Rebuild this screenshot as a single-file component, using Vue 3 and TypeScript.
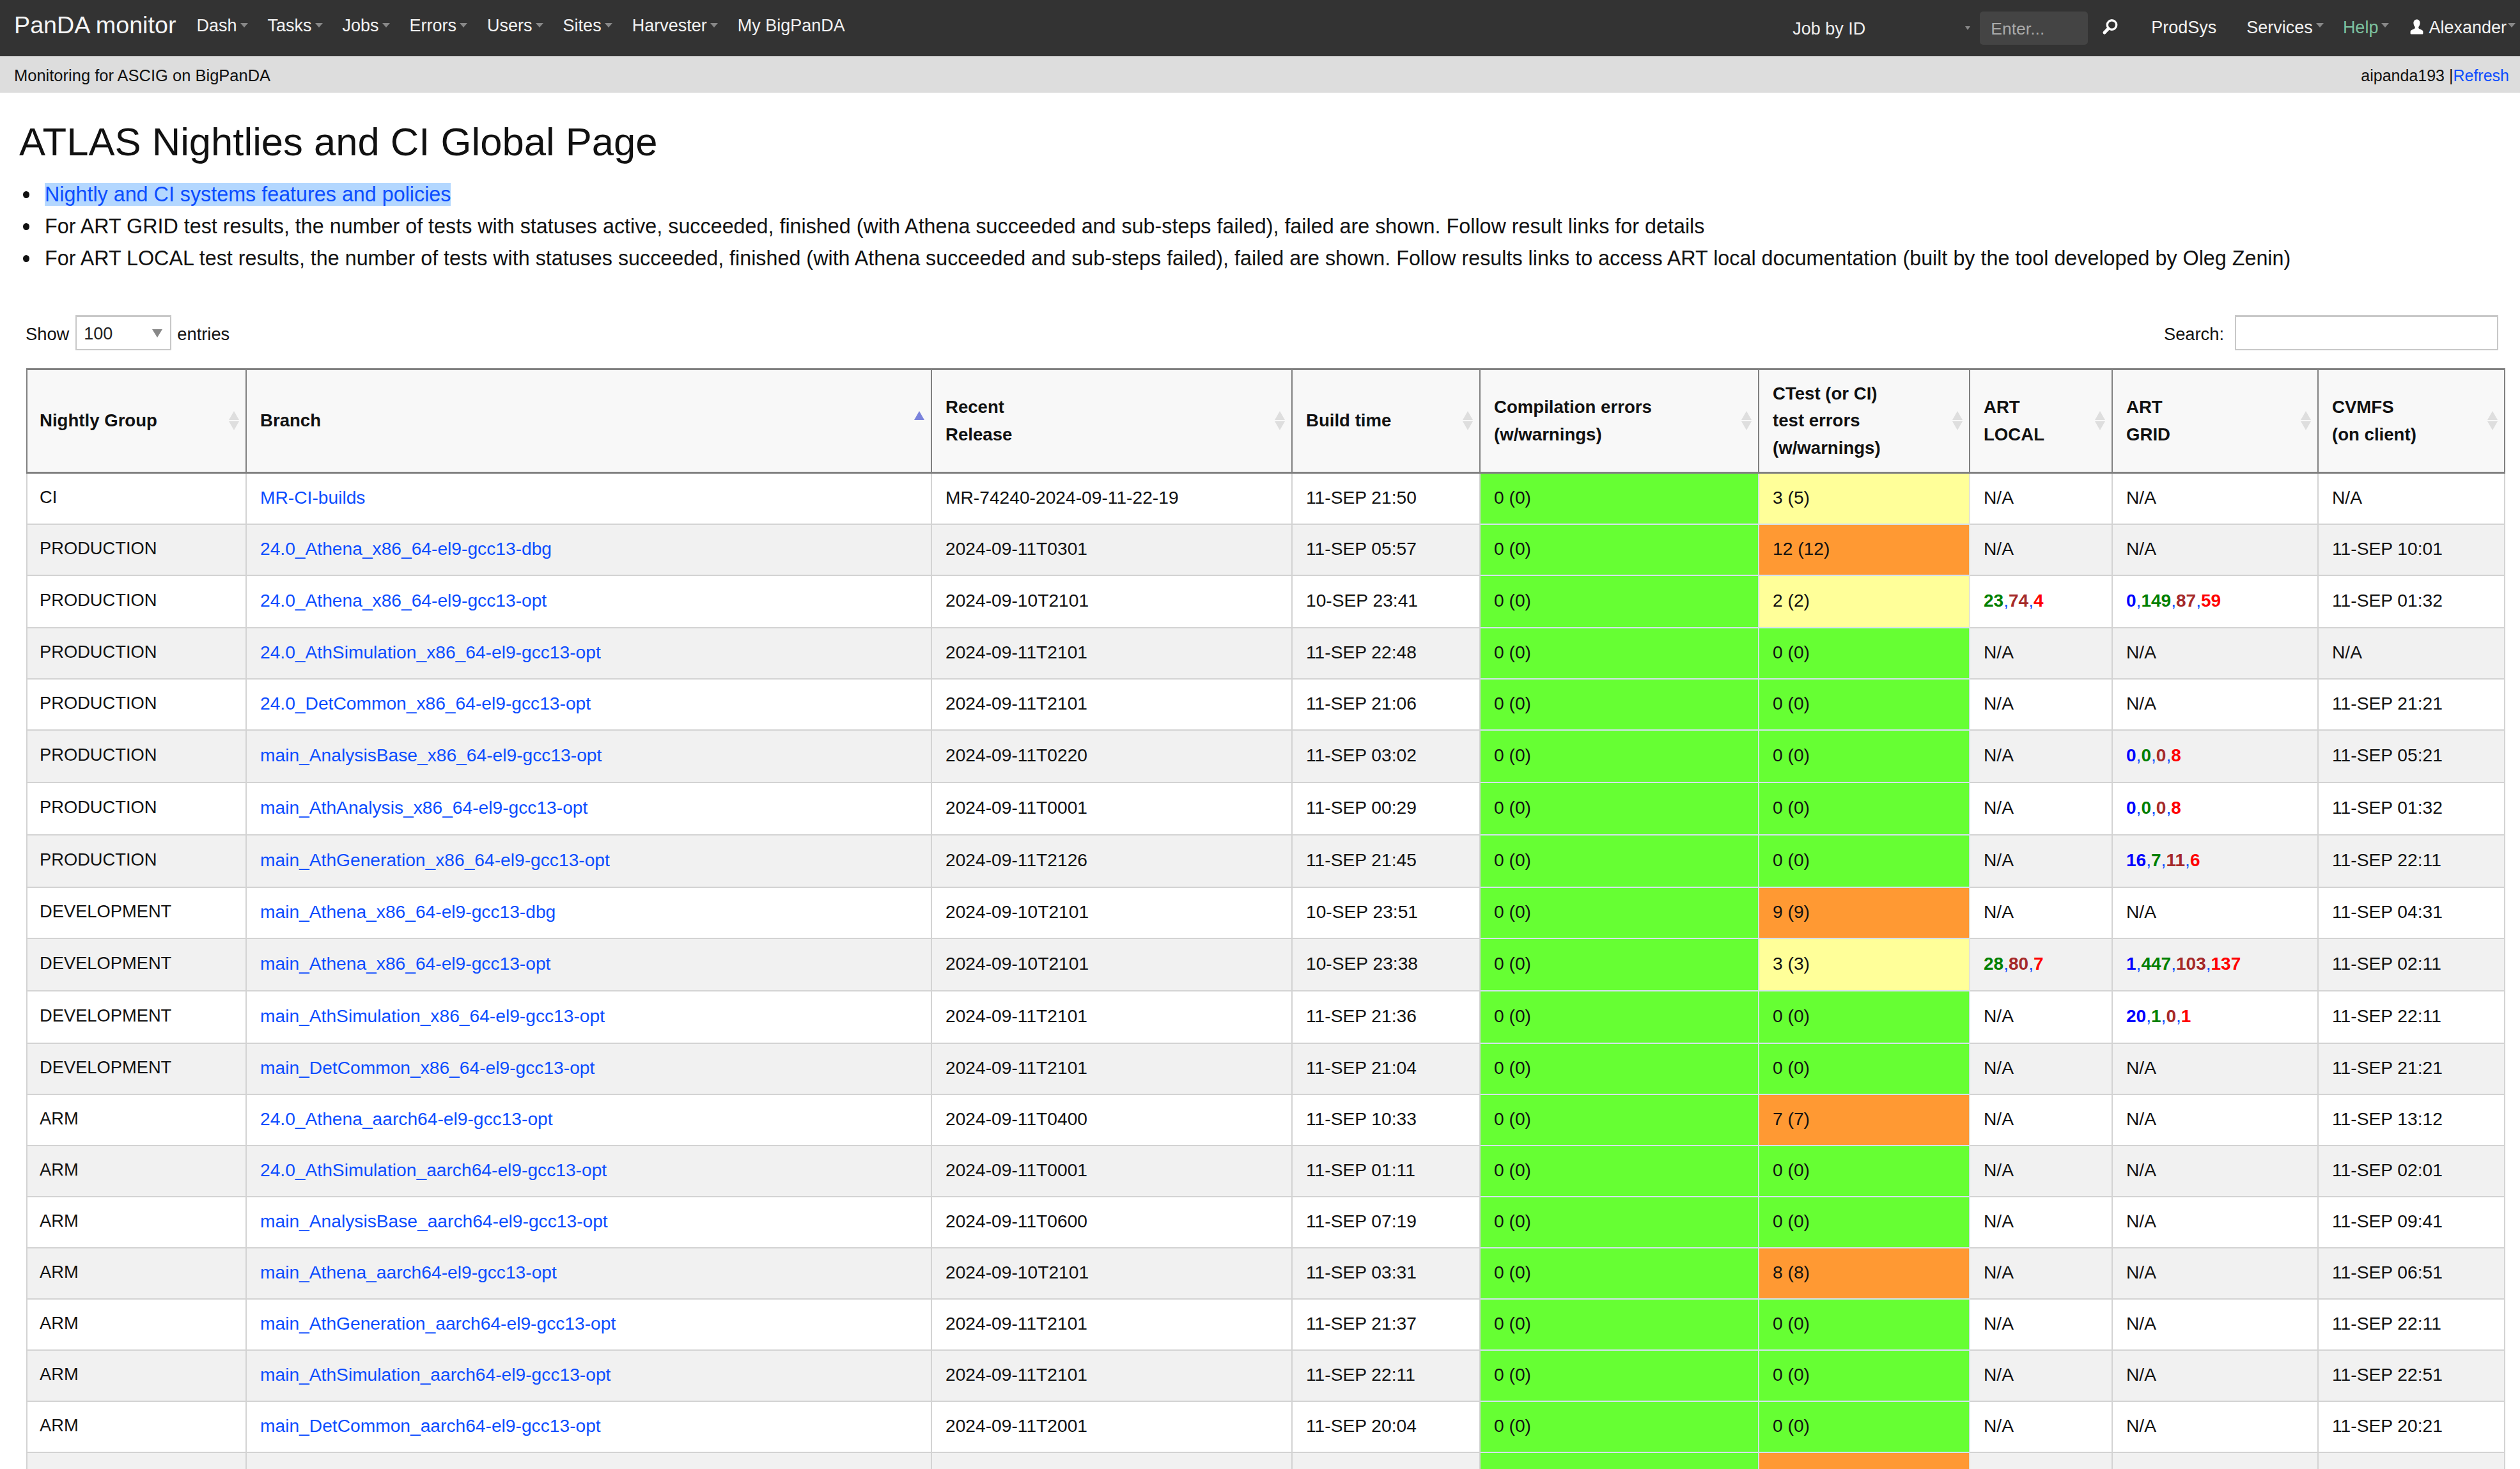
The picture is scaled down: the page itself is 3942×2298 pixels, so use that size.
<script setup lang="ts">
interface Part { t: string; c: string }
interface Row {
  group: string
  branch: string
  release: string
  build: string
  ctest: string
  local: string
  grid: string
  cvmfs: string
}

const left = ['Dash', 'Tasks', 'Jobs', 'Errors', 'Users', 'Sites', 'Harvester']

const D = 'DEVELOPMENT'
const P = 'PRODUCTION'
const rows: Row[] = [
  { group: 'CI', branch: 'MR-CI-builds', release: 'MR-74240-2024-09-11-22-19', build: '11-SEP 21:50', ctest: '3 (5)', local: '', grid: '', cvmfs: 'N/A' },
  { group: P, branch: '24.0_Athena_x86_64-el9-gcc13-dbg', release: '2024-09-11T0301', build: '11-SEP 05:57', ctest: '12 (12)', local: '', grid: '', cvmfs: '11-SEP 10:01' },
  { group: P, branch: '24.0_Athena_x86_64-el9-gcc13-opt', release: '2024-09-10T2101', build: '10-SEP 23:41', ctest: '2 (2)', local: '23,74,4', grid: '0,149,87,59', cvmfs: '11-SEP 01:32' },
  { group: P, branch: '24.0_AthSimulation_x86_64-el9-gcc13-opt', release: '2024-09-11T2101', build: '11-SEP 22:48', ctest: '0 (0)', local: '', grid: '', cvmfs: 'N/A' },
  { group: P, branch: '24.0_DetCommon_x86_64-el9-gcc13-opt', release: '2024-09-11T2101', build: '11-SEP 21:06', ctest: '0 (0)', local: '', grid: '', cvmfs: '11-SEP 21:21' },
  { group: P, branch: 'main_AnalysisBase_x86_64-el9-gcc13-opt', release: '2024-09-11T0220', build: '11-SEP 03:02', ctest: '0 (0)', local: '', grid: '0,0,0,8', cvmfs: '11-SEP 05:21' },
  { group: P, branch: 'main_AthAnalysis_x86_64-el9-gcc13-opt', release: '2024-09-11T0001', build: '11-SEP 00:29', ctest: '0 (0)', local: '', grid: '0,0,0,8', cvmfs: '11-SEP 01:32' },
  { group: P, branch: 'main_AthGeneration_x86_64-el9-gcc13-opt', release: '2024-09-11T2126', build: '11-SEP 21:45', ctest: '0 (0)', local: '', grid: '16,7,11,6', cvmfs: '11-SEP 22:11' },
  { group: D, branch: 'main_Athena_x86_64-el9-gcc13-dbg', release: '2024-09-10T2101', build: '10-SEP 23:51', ctest: '9 (9)', local: '', grid: '', cvmfs: '11-SEP 04:31' },
  { group: D, branch: 'main_Athena_x86_64-el9-gcc13-opt', release: '2024-09-10T2101', build: '10-SEP 23:38', ctest: '3 (3)', local: '28,80,7', grid: '1,447,103,137', cvmfs: '11-SEP 02:11' },
  { group: D, branch: 'main_AthSimulation_x86_64-el9-gcc13-opt', release: '2024-09-11T2101', build: '11-SEP 21:36', ctest: '0 (0)', local: '', grid: '20,1,0,1', cvmfs: '11-SEP 22:11' },
  { group: D, branch: 'main_DetCommon_x86_64-el9-gcc13-opt', release: '2024-09-11T2101', build: '11-SEP 21:04', ctest: '0 (0)', local: '', grid: '', cvmfs: '11-SEP 21:21' },
  { group: 'ARM', branch: '24.0_Athena_aarch64-el9-gcc13-opt', release: '2024-09-11T0400', build: '11-SEP 10:33', ctest: '7 (7)', local: '', grid: '', cvmfs: '11-SEP 13:12' },
  { group: 'ARM', branch: '24.0_AthSimulation_aarch64-el9-gcc13-opt', release: '2024-09-11T0001', build: '11-SEP 01:11', ctest: '0 (0)', local: '', grid: '', cvmfs: '11-SEP 02:01' },
  { group: 'ARM', branch: 'main_AnalysisBase_aarch64-el9-gcc13-opt', release: '2024-09-11T0600', build: '11-SEP 07:19', ctest: '0 (0)', local: '', grid: '', cvmfs: '11-SEP 09:41' },
  { group: 'ARM', branch: 'main_Athena_aarch64-el9-gcc13-opt', release: '2024-09-10T2101', build: '11-SEP 03:31', ctest: '8 (8)', local: '', grid: '', cvmfs: '11-SEP 06:51' },
  { group: 'ARM', branch: 'main_AthGeneration_aarch64-el9-gcc13-opt', release: '2024-09-11T2101', build: '11-SEP 21:37', ctest: '0 (0)', local: '', grid: '', cvmfs: '11-SEP 22:11' },
  { group: 'ARM', branch: 'main_AthSimulation_aarch64-el9-gcc13-opt', release: '2024-09-11T2101', build: '11-SEP 22:11', ctest: '0 (0)', local: '', grid: '', cvmfs: '11-SEP 22:51' },
  { group: 'ARM', branch: 'main_DetCommon_aarch64-el9-gcc13-opt', release: '2024-09-11T2001', build: '11-SEP 20:04', ctest: '0 (0)', local: '', grid: '', cvmfs: '11-SEP 20:21' },
]

const heads: { lines: string[]; sort: string }[] = [
  { lines: ['Nightly Group'], sort: 'both' },
  { lines: ['Branch'], sort: 'asc' },
  { lines: ['Recent', 'Release'], sort: 'both' },
  { lines: ['Build time'], sort: 'both' },
  { lines: ['Compilation errors', '(w/warnings)'], sort: 'both' },
  { lines: ['CTest (or CI)', 'test errors', '(w/warnings)'], sort: 'both' },
  { lines: ['ART', 'LOCAL'], sort: 'both' },
  { lines: ['ART', 'GRID'], sort: 'both' },
  { lines: ['CVMFS', '(on client)'], sort: 'both' },
]

const widths = [345, 1072, 564, 294, 436, 330, 223, 322, 292]

function ctestClass(v: string): string {
  const n = parseInt(v, 10)
  if (n === 0) return 'ok'
  return n < 5 ? 'warn' : 'bad'
}

function parts(v: string, colors: string[]): Part[] {
  return v.split(',').map((t, i) => ({ t, c: colors[i] }))
}
const localColors = ['c-green', 'c-brown', 'c-red']
const gridColors = ['c-blue', 'c-green', 'c-brown', 'c-red']
</script>

<template>
  <div class="page">
    <header class="topbar">
      <nav class="nav-left">
        <span class="logo">PanDA monitor</span>
        <a v-for="item in left" :key="item" class="nav-item">{{ item }}<i class="caret"></i></a>
        <a class="nav-item">My BigPanDA</a>
      </nav>
      <div class="nav-right">
        <span class="job-select">Job by ID<i class="caret small"></i></span>
        <span class="enter">Enter...</span>
        <svg class="search-icon" viewBox="0 0 26 26" width="26" height="26" aria-hidden="true">
          <circle cx="15.5" cy="10" r="7.2" fill="none" stroke="#fff" stroke-width="3.4" />
          <path d="M10.2 15.6 L4 22" stroke="#fff" stroke-width="5" stroke-linecap="round" />
        </svg>
        <a class="r-item prod">ProdSys</a>
        <a class="r-item serv">Services<i class="caret"></i></a>
        <a class="r-item help">Help<i class="caret"></i></a>
        <a class="r-item user">
          <svg class="user-icon" viewBox="0 0 21 24" width="21" height="24" aria-hidden="true">
            <path
              fill="#fff"
              d="M10.5 0.5C7 0.5 5.4 3 5.4 6c0 2.6 1.1 4.8 2.3 6v1.7c0 .9-1 1.4-2.6 2C2.6 16.6.6 17.4.6 19.5v2.8c0 .8.6 1.3 1.3 1.3h17.2c.7 0 1.3-.5 1.3-1.3v-2.8c0-2.1-2-2.9-4.5-3.8-1.6-.6-2.6-1.1-2.6-2V12c1.2-1.2 2.3-3.4 2.3-6 0-3-1.6-5.5-5.1-5.500z"
            />
          </svg>Alexander<i class="caret tight"></i>
        </a>
      </div>
    </header>

    <div class="subbar">
      <span class="sub-left">Monitoring for ASCIG on BigPanDA</span>
      <span class="sub-right">aipanda193 <span class="pipe">|</span><a class="link">Refresh</a></span>
    </div>

    <main class="content">
      <h1 class="title">ATLAS Nightlies and CI Global Page</h1>
      <ul class="notes">
        <li><a class="link selected">Nightly and CI systems features and policies</a></li>
        <li>For ART GRID test results, the number of tests with statuses active, succeeded, finished (with Athena succeeded and sub-steps failed), failed are shown. Follow result links for details</li>
        <li>For ART LOCAL test results, the number of tests with statuses succeeded, finished (with Athena succeeded and sub-steps failed), failed are shown. Follow results links to access ART local documentation (built by the tool developed by Oleg Zenin)</li>
      </ul>

      <div class="controls">
        <label class="length"><span class="ctl-text">Show</span>
          <span class="select-box">100<i class="select-arrow"></i></span>
          <span class="ctl-text">entries</span></label>
        <label class="filter"><span class="ctl-text">Search:</span>
          <input class="search-box" type="text" />
        </label>
      </div>

      <table class="grid">
        <colgroup>
          <col v-for="(w, i) in widths" :key="i" :style="{ width: w + 'px' }" />
        </colgroup>
        <thead>
          <tr>
            <th v-for="(h, i) in heads" :key="i">
              <template v-for="(l, j) in h.lines" :key="j">{{ l }}<br v-if="j < h.lines.length - 1" /></template>
              <span class="sort" :class="h.sort"></span>
            </th>
          </tr>
        </thead>
        <tbody>
          <tr v-for="r in rows" :key="r.branch" :class="{ tall: r.grid }">
            <td>{{ r.group }}</td>
            <td><a class="link">{{ r.branch }}</a></td>
            <td>{{ r.release }}</td>
            <td>{{ r.build }}</td>
            <td class="ok">0 (0)</td>
            <td :class="ctestClass(r.ctest)">{{ r.ctest }}</td>
            <td>
              <template v-if="r.local">
                <template v-for="(p, i) in parts(r.local, localColors)" :key="i"><span v-if="i" class="comma">,</span><b :class="p.c">{{ p.t }}</b></template>
              </template>
              <template v-else>N/A</template>
            </td>
            <td>
              <template v-if="r.grid">
                <template v-for="(p, i) in parts(r.grid, gridColors)" :key="i"><span v-if="i" class="comma">,</span><b :class="p.c">{{ p.t }}</b></template>
              </template>
              <template v-else>N/A</template>
            </td>
            <td>{{ r.cvmfs }}</td>
          </tr>
          <tr>
            <td></td><td></td><td></td><td></td><td class="ok"></td><td class="bad"></td><td></td><td></td><td></td>
          </tr>
        </tbody>
      </table>
    </main>
  </div>
</template>

<style>
html, body { margin: 0; overflow: hidden; background: #fff; }
</style>

<style scoped>
.page {
  width: 3942px;
  height: 2298px;
  overflow: hidden;
  font-family: "Liberation Sans", Arial, sans-serif;
  font-size: 27px;
  color: #111;
}
.topbar {
  height: 88px;
  background: #333;
  display: flex;
  justify-content: space-between;
  color: #fff;
}
.nav-left { display: flex; align-items: flex-start; padding-left: 22px; }
.logo { font-size: 37.7px; line-height: 78px; margin-right: 32px; color: #f4f4f4; }
.nav-item { line-height: 80px; margin-right: 31px; white-space: nowrap; color: #f2f2f2; font-size: 27px; }
.caret {
  display: inline-block;
  width: 0;
  height: 0;
  margin-left: 5px;
  vertical-align: 6px;
  border-left: 6px solid transparent;
  border-right: 6px solid transparent;
  border-top: 7px solid #888;
}
.nav-right { display: flex; align-items: flex-start; padding-right: 7px; color: #f2f2f2; }
.job-select { line-height: 90px; width: 293px; position: relative; color: #eee; }
.caret.small {
  position: absolute;
  right: 15px;
  top: 41px;
  margin: 0;
  border-left-width: 4px;
  border-right-width: 4px;
  border-top-width: 6px;
}
.enter {
  width: 169px;
  height: 52px;
  margin-top: 18px;
  box-sizing: border-box;
  padding-left: 17px;
  line-height: 54px;
  background: #444;
  border-radius: 5px;
  color: #aaa;
  font-size: 26.5px;
}
.search-icon { margin: 29px 0 0 22px; }
.r-item { line-height: 86px; white-space: nowrap; }
.r-item .caret { vertical-align: 9px; }
.prod { margin-left: 51px; }
.serv { margin-left: 47px; }
.help { margin-left: 30px; color: #7dc2a0; }
.user { margin-left: 33px; display: flex; align-items: flex-start; }
.user-icon { margin: 30px 8px 0 0; }
.r-item .caret.tight { margin-left: 2px; margin-top: 36px; vertical-align: top; }
.subbar {
  height: 57px;
  box-sizing: border-box;
  background: #ddd;
  display: flex;
  justify-content: space-between;
  align-items: center;
  padding: 3px 17px 0 22px;
  color: #111;
}
.sub-left { font-size: 25.5px; }
.sub-right { font-size: 25px; }
.link { color: #0b4cff; text-decoration: none; }
.content { padding: 0 23px 0 0; }
.title {
  font-size: 61.6px;
  font-weight: 400;
  line-height: 72px;
  margin: 41px 0 21px 30px;
  color: #111;
}
.notes {
  list-style: none;
  margin: 0 0 64px 30px;
  padding: 0 0 0 40px;
  font-size: 32.3px;
  line-height: 50px;
}
.notes li { position: relative; }
.notes li::before {
  content: "";
  position: absolute;
  left: -34px;
  top: 20px;
  width: 10px;
  height: 11px;
  border-radius: 50%;
  background: #111;
}
.selected { background: #b3d7ff; }
.controls {
  display: flex;
  justify-content: space-between;
  height: 55px;
  margin: 0 0 28px 40px;
  padding-right: 11px;
}
.length, .filter { display: flex; align-items: center; gap: 9px; height: 55px; }
.ctl-text { font-size: 27.3px; padding-top: 4px; }
.select-box {
  position: relative;
  box-sizing: border-box;
  width: 150px;
  height: 55px;
  border: 2px solid #c8c8c8;
  border-top-width: 3px;
  line-height: 52px;
  padding-left: 11px;
  color: #222;
  margin-left: 1px;
}
.select-arrow {
  position: absolute;
  right: 12px;
  top: 19px;
  width: 0;
  height: 0;
  border-left: 8px solid transparent;
  border-right: 8px solid transparent;
  border-top: 13px solid #888;
}
.filter { gap: 17px; }
.search-box {
  box-sizing: border-box;
  width: 412px;
  height: 55px;
  border: 2px solid #c8c8c8;
  border-top-width: 3px;
  background: #fff;
  padding: 0;
  outline: none;
}
.grid {
  margin-left: 41px;
  width: 3878px;
  table-layout: fixed;
  border-collapse: separate;
  border-spacing: 0;
}
th {
  position: relative;
  height: 165px;
  box-sizing: border-box;
  padding: 0 36px 0 21px;
  text-align: left;
  font-size: 27.6px;
  font-weight: 700;
  line-height: 42.5px;
  background: #f8f8f8;
  border-top: 3px solid #808080;
  border-right: 2px solid #808080;
  border-bottom: 3px solid #808080;
}
th:first-child, td:first-child { border-left: 2px solid #808080; padding-left: 19px; }
td:first-child { border-left-color: #d3d3d3; font-size: 27.3px; }
td {
  height: 80px;
  box-sizing: border-box;
  padding: 0 19px 4px 21px;
  font-size: 28.2px;
  white-space: nowrap;
  overflow: hidden;
  background: #fff;
  border-right: 2px solid #d3d3d3;
  border-bottom: 2px solid #d3d3d3;
}
tr.tall td { height: 82px; }
tbody tr:nth-child(even) td { background: #f1f1f1; }
tbody tr td.ok { background: #66ff33; border-right-color: #cfe2e2; border-bottom-color: #d4e2ee; }
tbody tr td.warn { background: #ffff99; border-right-color: #e4e4d8; border-bottom-color: #d4e2ee; }
tbody tr td.bad { background: #ff9933; border-right-color: #e4e4d8; border-bottom-color: #d4e2ee; }
.comma { color: #0b4cff; }
b { font-size: 28px; }
.c-green { color: #008000; }
.c-brown { color: #a52a2a; }
.c-red { color: #ff0000; }
.c-blue { color: #0000ff; }
.sort {
  position: absolute;
  right: 10px;
  top: 64px;
  width: 16px;
  height: 30px;
}
.sort::before, .sort::after {
  content: "";
  position: absolute;
  left: 0;
  width: 0;
  height: 0;
  border-left: 8px solid transparent;
  border-right: 8px solid transparent;
}
.sort::before { top: 0; border-bottom: 14px solid #dedede; }
.sort::after { top: 16px; border-top: 14px solid #dedede; }
.sort.asc::before { border-bottom-color: #7b83dc; }
.sort.asc::after { border-top-color: transparent; }
</style>
